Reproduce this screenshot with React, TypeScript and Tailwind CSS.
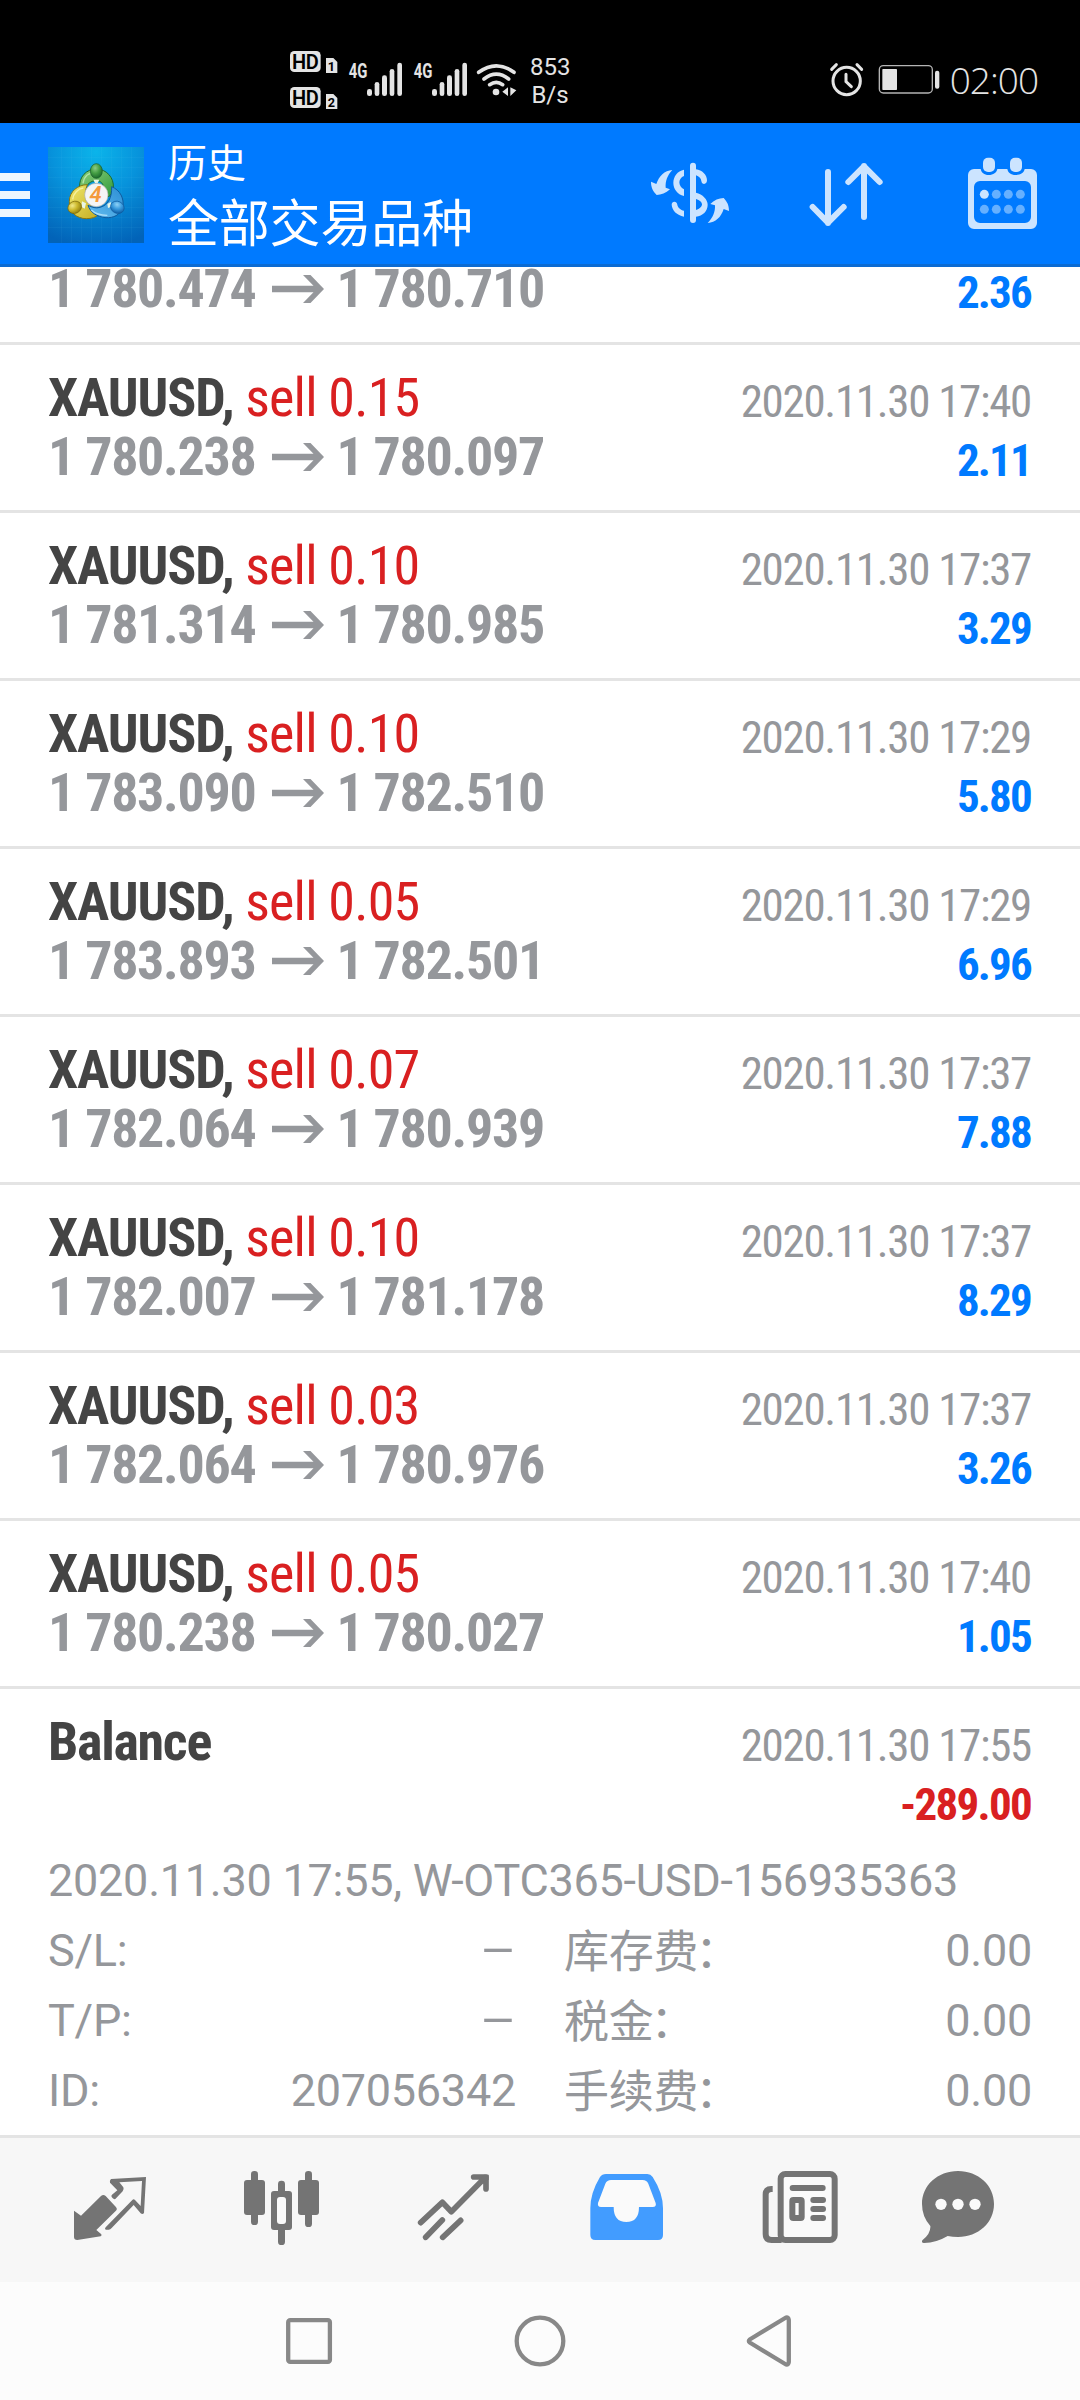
import React from 'react'

type Deal = {
  volume: string
  open: string
  close: string
  time: string
  profit: string
}

const deals: Deal[] = [
  { volume: '0.15', open: '1 780.238', close: '1 780.097', time: '2020.11.30 17:40', profit: '2.11' },
  { volume: '0.10', open: '1 781.314', close: '1 780.985', time: '2020.11.30 17:37', profit: '3.29' },
  { volume: '0.10', open: '1 783.090', close: '1 782.510', time: '2020.11.30 17:29', profit: '5.80' },
  { volume: '0.05', open: '1 783.893', close: '1 782.501', time: '2020.11.30 17:29', profit: '6.96' },
  { volume: '0.07', open: '1 782.064', close: '1 780.939', time: '2020.11.30 17:37', profit: '7.88' },
  { volume: '0.10', open: '1 782.007', close: '1 781.178', time: '2020.11.30 17:37', profit: '8.29' },
  { volume: '0.03', open: '1 782.064', close: '1 780.976', time: '2020.11.30 17:37', profit: '3.26' },
  { volume: '0.05', open: '1 780.238', close: '1 780.027', time: '2020.11.30 17:40', profit: '1.05' }
]

const details = [
  { label: 'S/L:', value: '–', feeLabel: '库存费', fee: '0.00' },
  { label: 'T/P:', value: '–', feeLabel: '税金', fee: '0.00' },
  { label: 'ID:', value: '207056342', feeLabel: '手续费', fee: '0.00' }
]

const HdIcon = () => (
  <svg className="h-[60px] w-[50px]" viewBox="54 60 150 180" fill="#e4e4e4">
    <rect x="60" y="63" width="92" height="63" rx="13" />
    <rect x="60" y="171" width="92" height="63" rx="13" />
    <path d="M168 84h22l12 12v33h-34zM168 192h22l12 12v33h-34z" />
    <g fill="#000" fontFamily="Roboto, sans-serif" fontWeight="600" textAnchor="middle">
      <text x="106" y="117" fontSize="60" textLength="80">HD</text>
      <text x="106" y="225" fontSize="60" textLength="80">HD</text>
      <text x="184" y="122" fontSize="38" fontWeight="700">1</text>
      <text x="184" y="230" fontSize="38" fontWeight="700">2</text>
    </g>
  </svg>
)

const SignalIcon = () => (
  <svg className="h-[60px] w-[56px]" viewBox="234 60 168 180" fill="#e4e4e4">
    <text x="236" y="143" fontFamily="Roboto, sans-serif" fontSize="60" fontWeight="700" textLength="56" lengthAdjust="spacingAndGlyphs">4G</text>
    <rect x="291" y="177" width="15" height="21" rx="7" />
    <rect x="314" y="156" width="14" height="42" rx="7" />
    <rect x="336" y="136" width="15" height="62" rx="7" />
    <rect x="359" y="117" width="14" height="81" rx="7" />
    <rect x="382" y="98" width="14" height="100" rx="7" />
  </svg>
)

const WifiIcon = () => (
  <svg className="h-[60px] w-[42px]" viewBox="615 60 126 180" fill="none" stroke="#e4e4e4" strokeWidth="11" strokeLinecap="round">
    <path d="M626 127Q679 88 732 127M642 147Q679 118 716 147M659 164Q679 150 698 164" />
    <circle cx="678" cy="186" r="10" fill="#e4e4e4" stroke="none" />
    <path d="M714 172v26l-17-13zM721 172v26l18-17z" fill="#e4e4e4" stroke="none" />
  </svg>
)

const AlarmBatteryIcon = () => (
  <svg className="h-[40px] w-[114px]" viewBox="54 60 342 120" fill="none" stroke="#e4e4e4" strokeLinecap="round">
    <circle cx="110" cy="123" r="41" strokeWidth="9" />
    <path d="M108 103v22l16 15" strokeWidth="9" />
    <path d="M65 88l14-14M155 88l-14-14" strokeWidth="9" />
    <rect x="208" y="77" width="159" height="82" rx="12" stroke="#b4b4b4" strokeWidth="4" />
    <rect x="217" y="87" width="44" height="63" rx="2" fill="#e4e4e4" stroke="none" />
    <rect x="375" y="92" width="13" height="54" rx="6" fill="#e4e4e4" stroke="none" />
  </svg>
)

const Logo = () => (
  <svg className="h-24 w-24" viewBox="144 81 288 288">
    <defs>
      <radialGradient id="sky" cx="0.5" cy="0.05" r="1">
        <stop offset="0" stopColor="#0bb4ea" />
        <stop offset="0.45" stopColor="#0793dc" />
        <stop offset="1" stopColor="#0263b8" />
      </radialGradient>
      <linearGradient id="green" x1="0" y1="0" x2="1" y2="1">
        <stop offset="0" stopColor="#8fd07c" />
        <stop offset="1" stopColor="#2f9a3c" />
      </linearGradient>
      <linearGradient id="yellow" x1="0" y1="0" x2="1" y2="1">
        <stop offset="0" stopColor="#f0e86c" />
        <stop offset="1" stopColor="#c4ad22" />
      </linearGradient>
      <linearGradient id="blue" x1="1" y1="0" x2="0" y2="1">
        <stop offset="0" stopColor="#2c8ed4" />
        <stop offset="1" stopColor="#63bdf0" />
      </linearGradient>
      <radialGradient id="greenHead" cx="0.4" cy="0.3" r="0.7">
        <stop offset="0" stopColor="#8ccb86" />
        <stop offset="0.5" stopColor="#47a045" />
        <stop offset="1" stopColor="#1c6b2c" />
      </radialGradient>
      <radialGradient id="yellowHead" cx="0.4" cy="0.3" r="0.7">
        <stop offset="0" stopColor="#f1e98a" />
        <stop offset="0.5" stopColor="#cdb92e" />
        <stop offset="1" stopColor="#93800f" />
      </radialGradient>
      <radialGradient id="blueHead" cx="0.4" cy="0.3" r="0.7">
        <stop offset="0" stopColor="#8fd2f6" />
        <stop offset="0.5" stopColor="#3a9cdf" />
        <stop offset="1" stopColor="#0e5fa8" />
      </radialGradient>
    </defs>
    <rect x="144" y="81" width="288" height="288" fill="url(#sky)" />
    <path
      d="M184 81v288M214 81v288M244 81v288M274 81v288M304 81v288M334 81v288M364 81v288M394 81v288M144 112h288M144 142h288M144 172h288M144 202h288M144 232h288M144 262h288M144 292h288M144 322h288"
      stroke="#6fd0f4"
      strokeOpacity="0.12"
      strokeWidth="2"
    />
    {/* three figures joined in a ring */}
    <g strokeLinejoin="round">
      <path d="M239 204C236 170 260 147 289 147C318 147 343 172 340 204C339 218 332 228 324 230L312 206C310 190 302 182 289 182C272 182 260 194 256 206z" fill="url(#green)" stroke="#1c6b30" strokeWidth="3" />
      <path d="M262 194C234 194 208 214 208 244C206 276 230 296 259 296C274 296 288 292 296 284L272 256C256 246 250 226 262 194z" fill="url(#yellow)" stroke="#8a7710" strokeWidth="3" />
      <path d="M335 200C360 210 374 236 368 262C360 286 340 294 318 293C290 291 270 276 264 256C276 262 288 266 300 262C324 256 336 234 335 200z" fill="url(#blue)" stroke="#0f5b9e" strokeWidth="3" />
      <path d="M249 190C252 168 268 157 289 157" fill="none" stroke="#c4ebb6" strokeOpacity="0.8" strokeWidth="4" />
      <path d="M218 238C220 220 234 206 250 204" fill="none" stroke="#faf7b0" strokeOpacity="0.8" strokeWidth="4" />
      <path d="M274 270C288 284 306 286 322 286" fill="none" stroke="#c2e8fb" strokeOpacity="0.8" strokeWidth="4" />
    </g>
    <path d="M246 244l12 6-4 16-10-6zM322 252l10-6 2 14-10 4zM280 179h18l-5 10h-8z" fill="#e9f6e6" />
    <ellipse cx="289" cy="153" rx="18" ry="22" fill="url(#greenHead)" stroke="#195c29" strokeWidth="2" />
    <ellipse cx="224" cy="262" rx="21" ry="18" fill="url(#yellowHead)" stroke="#7a680a" strokeWidth="2" transform="rotate(-25 224 262)" />
    <ellipse cx="352" cy="262" rx="21" ry="18" fill="url(#blueHead)" stroke="#0f5b9e" strokeWidth="2" transform="rotate(25 352 262)" />
    <circle cx="289" cy="225" r="35" fill="#f5f5f5" stroke="#b5b5b0" strokeWidth="2" />
    <text x="287" y="246" fill="#f49a3c" fontFamily="Roboto, sans-serif" fontSize="66" fontWeight="600" fontStyle="italic" textAnchor="middle">4</text>
  </svg>
)

const CurrencyIcon = () => (
  <svg className="h-24 w-24" viewBox="66 81 288 288" fill="#cce4ff">
    <path d="M210 137a9 9 0 0 1 18 0v11c18 2 33 16 33 33c0 14-16 14-17 2c-1-8-7-14-16-17v52c20 4 35 21 35 36c0 19-15 34-35 36v10a9 9 0 0 1-18 0zM228 237v33c11-3 18-10 18-17c0-7-7-13-18-16z" fillRule="evenodd" />
    <path d="M192 149v19c-9 3-14 12-14 19s5 17 14 21v20c-20-5-32-22-32-40s12-35 32-39zM192 290c-21-4-36-19-37-36c0-12 16-12 17 0c1 8 10 16 20 18z" />
    <path d="M157 150C133 152 117 168 109 192L93 185C93 203 99 213 110 225C123 225 138 220 150 208L137 203C136 183 142 166 157 150z" />
    <path d="M263 309C287 307 303 292 311 267L327 273C327 256 322 246 311 234C297 234 282 240 271 252L285 256C286 276 279 293 263 309z" />
  </svg>
)

const SortIcon = () => (
  <svg className="h-24 w-24" viewBox="534 81 288 288" fill="none" stroke="#cce4ff" strokeWidth="18" strokeLinecap="round" strokeLinejoin="round">
    <path d="M624 156v153M578 261l46 47 47-47M732 291V138M685 186l47-47 47 47" />
  </svg>
)

const CalendarIcon = () => (
  <svg className="h-24 w-24" viewBox="1002 81 288 288">
    <path
      d="M1062 147h20c2 11 10 18 24 18s24-7 26-18h30c2 11 10 18 25 18s25-7 27-18h19a18 18 0 0 1 18 18v144a18 18 0 0 1-18 18h-171a18 18 0 0 1-18-18v-144a18 18 0 0 1 18-18zM1080 183a18 18 0 0 0-18 18v90a18 18 0 0 0 18 18h135a18 18 0 0 0 18-18v-90a18 18 0 0 0-18-18z"
      fill="#cce4ff"
      fillRule="evenodd"
    />
    <rect x="1089" y="113" width="36" height="43" rx="15" fill="#cce4ff" />
    <rect x="1170" y="113" width="36" height="43" rx="15" fill="#cce4ff" />
    {[1093, 1129, 1165, 1201].map((x) => (
      <g key={x} fill="#66b0ff">
        <circle cx={x} cy="223" r="13.5" fill={x === 1093 ? '#cce4ff' : '#66b0ff'} />
        <circle cx={x} cy="268" r="13.5" />
      </g>
    ))}
  </svg>
)

const QuotesIcon = () => (
  <svg className="h-24 w-24" viewBox="66 96 288 288" fill="#747474">
    <path d="M102 242l21 15 60-59q7-6 14 0l30 32q7 7 0 13l-58 57 15 13q2 4-2 6l-70 11q-10 0-10-9z" />
    <path d="M318 141l-6 108q-4 5-10 1l-21-25-66 69q-4 5-9 5h-9q-4-3 0-7l80-82q4-4 8 0l17 18 4-75-68 4 12 15q3 7-2 12l-22 23q-6 2-11-6-2-4 1-7l16-13-22-23q-2-6 3-11z" />
  </svg>
)

const CandlesIcon = () => (
  <svg className="h-24 w-24" viewBox="582 96 288 288" fill="#747474">
    <rect x="633" y="123" width="21" height="162" rx="10" />
    <rect x="612" y="150" width="63" height="105" rx="9" />
    <rect x="795" y="123" width="21" height="168" rx="10" />
    <rect x="774" y="150" width="63" height="105" rx="9" />
    <rect x="714" y="152" width="21" height="193" rx="10" />
    <rect x="693" y="183" width="63" height="117" rx="9" />
    <rect x="711" y="201" width="27" height="81" rx="9" fill="#fafafa" />
  </svg>
)

const TradeIcon = () => (
  <svg className="h-24 w-24" viewBox="1098 96 288 288" fill="none" stroke="#747474" strokeWidth="17" strokeLinecap="round" strokeLinejoin="round">
    <path d="M1142 278l65-61 27 28 100-101M1301 141h37v36" />
    <path d="M1332 134h14v15l-18 8-4-14z" fill="#747474" stroke="none" />
    <path d="M1157 322l50-52M1208 322l54-51" />
  </svg>
)

const HistoryIcon = () => (
  <svg className="h-24 w-24" viewBox="54 96 288 288">
    <path d="M138 150h120l32 81h-54v40h-75v-40h-50z" fill="#fafafa" />
    <path
      d="M138 132h124q10 0 16 9q31 48 31 94v80q0 15-15 15h-188q-15 0-15-15v-80q0-46 29-94q6-9 18-9zM153 150q-12 0-17 11l-22 58q-2 12 9 12h38q0 45 38 45t38-45h41q12 0 9-12l-22-58q-5-11-17-11z"
      fill="#429cff"
      fillRule="evenodd"
    />
  </svg>
)

const NewsIcon = () => (
  <svg className="h-24 w-24" viewBox="570 96 288 288" fill="none" stroke="#747474" strokeWidth="18">
    <rect x="662" y="132" width="162" height="198" rx="14" fill="#fafafa" />
    <path d="M638 177h-4q-17 0-17 17v118q0 18 18 18h30" />
    <path d="M698 174h90" strokeLinecap="round" />
    <path d="M760 210h29M760 237h29M760 264h29" strokeLinecap="round" />
    <rect x="697" y="210" width="28" height="54" rx="3" />
  </svg>
)

const ChatIcon = () => (
  <svg className="h-24 w-24" viewBox="1086 96 288 288">
    <path d="M1194 123c61 0 108 43 108 99s-47 99-108 99q-16 0-31-3q-33 20-71 21q-9-1-5-8q26-20 24-43q-25-28-25-66c0-56 47-99 108-99z" fill="#747474" />
    <g fill="#fafafa">
      <circle cx="1143" cy="223" r="17" />
      <circle cx="1194" cy="223" r="17" />
      <circle cx="1245" cy="223" r="17" />
    </g>
  </svg>
)

const ArrowRight = () => (
  <svg className="ml-[17px] mr-3 h-7 w-[52px]" viewBox="0 0 52 28" fill="#95979b">
    <path d="M0 10.7h41.5L31 0h7.5L52 14 38.5 28H31l10.5-10.7H0z" />
  </svg>
)

const StatusBar = () => (
  <div className="flex h-[123px] bg-black pl-[288px] pt-[50px] text-[#e4e4e4]">
    <HdIcon />
    <div className="ml-[10px]"><SignalIcon /></div>
    <div className="ml-[9px]"><SignalIcon /></div>
    <div className="ml-[6px]"><WifiIcon /></div>
    <div className="ml-[13px] mt-[3px] w-10 text-center text-[24px] leading-[28px]">
      853
      <br />
      B/s
    </div>
    <div className="ml-auto mt-[10px]"><AlarmBatteryIcon /></div>
    <div className="ml-[8px] mr-[42px] mt-[5px] font-['Open_Sans'] text-[37px] font-light leading-[50px] tracking-[-1px]">02:00</div>
  </div>
)

const Header = () => (
  <header className="flex h-36 items-center bg-[#007aff] pr-[30px] text-white shadow-[inset_0_-3px_0_#0c6bd2]">
    <div className="flex w-[30px] flex-col gap-[10px]">
      <div className="h-2 bg-[#ecf6ff]" />
      <div className="h-2 bg-[#ecf6ff]" />
      <div className="h-2 bg-[#ecf6ff]" />
    </div>
    <div className="ml-[18px]"><Logo /></div>
    <div className="ml-6 flex-1 pb-1 font-['Noto_Sans_CJK_SC']">
      <div className="text-[39px] leading-[54px]">历史</div>
      <div className="text-[51px] leading-[66px] tracking-[-0.2px]">全部交易品种</div>
    </div>
    <div className="flex gap-[60px]">
      <CurrencyIcon />
      <SortIcon />
      <CalendarIcon />
    </div>
  </header>
)

const Prices = ({ open, close }: { open: string; close: string }) => (
  <div className="flex items-center font-bold tracking-[-1.3px] text-[#95979b]">
    {open}
    <ArrowRight />
    {close}
  </div>
)

// lower half of the deal that is scrolled under the header
const ScrolledRow = () => (
  <div className="flex h-[78px] shrink-0 justify-between border-b-3 border-[#e4e4e4] pl-12 pr-[49px] font-stretch-condensed">
    <div className="text-[54px] leading-[43px]">
      <Prices open="1 780.474" close="1 780.710" />
    </div>
    <div className="text-[45px] font-bold leading-[51px] tracking-[-1.8px] text-[#007aff]">2.36</div>
  </div>
)

const DealRow = ({ volume, open, close, time, profit }: Deal) => (
  <div className="flex h-[168px] shrink-0 justify-between border-b-3 border-[#e4e4e4] pl-12 pr-[49px] pt-[23px] font-stretch-condensed">
    <div className="text-[54px] leading-[59px]">
      <div className="tracking-[-0.8px] text-[#d92021]">
        <span className="font-bold tracking-[-1.1px] text-[#444]">XAUUSD,</span> sell {volume}
      </div>
      <Prices open={open} close={close} />
    </div>
    <div className="pt-[4px] text-right text-[45px] leading-[59px]">
      <div className="tracking-[-1.3px] text-[#95979b]">{time}</div>
      <div className="font-bold tracking-[-1.8px] text-[#007aff]">{profit}</div>
    </div>
  </div>
)

const BalanceRow = () => (
  <div className="h-[446px] shrink-0 px-12 pt-[23px] text-[45px] text-[#95979b]">
    <div className="mr-px flex justify-between font-stretch-condensed">
      <div className="text-[54px] font-bold leading-[59px] tracking-[-1.3px] text-[#444]">Balance</div>
      <div className="pt-[4px] text-right leading-[59px]">
        <div className="tracking-[-1.3px]">2020.11.30 17:55</div>
        <div className="font-bold tracking-[-1.7px] text-[#d92021]">-289.00</div>
      </div>
    </div>
    <div className="mt-[12px] leading-[70px] tracking-[-0.25px]">
      <div>2020.11.30 17:55, W-OTC365-USD-156935363</div>
      {details.map((item) => (
        <div key={item.label} className="flex h-[70px] gap-12">
          <div className="flex flex-1 justify-between">
            <span>{item.label}</span>
            {item.value === '–' ? (
              <span className="origin-right scale-x-125">{item.value}</span>
            ) : (
              <span>{item.value}</span>
            )}
          </div>
          <div className="flex flex-1 justify-between">
            <span className="pt-[2px]">
              {item.feeLabel}
              <span className="-ml-[3px]">：</span>
            </span>
            <span>{item.fee}</span>
          </div>
        </div>
      ))}
    </div>
  </div>
)

const TabBar = () => (
  <nav className="flex h-[147px] items-center gap-[76px] border-t-3 border-[#e4e4e4] bg-[#f7f7f7] pl-[62px]">
    <QuotesIcon />
    <CandlesIcon />
    <TradeIcon />
    <HistoryIcon />
    <NewsIcon />
    <ChatIcon />
  </nav>
)

const SystemNav = () => (
  <div className="flex h-[118px] items-center bg-[#fcfcfc] pl-[279px]">
    <svg className="h-[60px] w-[60px]" viewBox="0 0 60 60" fill="none" stroke="#888" strokeWidth="4.3">
      <rect x="9.2" y="9.2" width="41.7" height="41.7" rx="2" />
    </svg>
    <svg className="ml-[171px] h-[60px] w-[60px]" viewBox="0 0 60 60" fill="none" stroke="#888" strokeWidth="4.3">
      <circle cx="30" cy="30" r="23.3" />
    </svg>
    <svg className="ml-[171px] h-[60px] w-[60px]" viewBox="0 0 60 60" fill="none" stroke="#888" strokeWidth="4.3" strokeLinejoin="round">
      <path d="M8.7 28.5Q7 30 8.7 31.5L45 53.5Q47.5 54 47.8 51V9Q47.5 6 45 6.5z" />
    </svg>
  </div>
)

const App = () => {
  return (
    <div className="flex h-[2400px] w-[1080px] flex-col overflow-hidden bg-white font-[Roboto,'Noto_Sans_CJK_SC',sans-serif]">
      <StatusBar />
      <Header />
      <main className="flex flex-1 flex-col">
        <ScrolledRow />
        {deals.map((deal, i) => (
          <DealRow key={i} {...deal} />
        ))}
        <BalanceRow />
      </main>
      <TabBar />
      <SystemNav />
    </div>
  )
}

export default App
